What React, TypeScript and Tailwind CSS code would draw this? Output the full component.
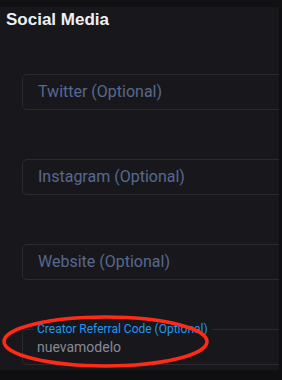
const fields = ["Twitter (Optional)", "Instagram (Optional)", "Website (Optional)"];

const App = () => {
  return (
    <div className="w-[282px] h-[380px] bg-[#0f0f11] flex flex-col overflow-hidden">
      <div className="h-[7px] bg-[#111113]" />
      <div className="relative w-[279px] h-[363px] bg-[#18181c] overflow-hidden">
        <div className="pl-[6px] pt-[3px] text-[17px] leading-[20px] font-bold text-[#eef0f6] font-['Liberation_Sans',Arial,sans-serif]">
          Social Media
        </div>

        <div className="flex flex-col pl-[22px] mt-[44px] gap-[49px] font-['Roboto',sans-serif]">
          {fields.map((f) => (
            <div
              key={f}
              className="w-[300px] h-[36px] rounded-[5px] border border-[#2a2a30] flex items-center pl-[15px] text-[16px] text-[#56698f]"
            >
              {f}
            </div>
          ))}

          <div className="relative w-[300px] h-[36px] rounded-[5px] border border-[#2a2a30] flex items-center pl-[14px] text-[14px] text-[#868996]">
            <span className="absolute -top-[7px] left-[10px] px-[4px] bg-[#18181c] text-[12px] leading-[12px] text-[#2196f3]">
              Creator Referral Code (Optional)
            </span>
            <span className="pt-[1px]">nuevamodelo</span>
          </div>
        </div>

        <svg className="absolute left-0 top-0 pointer-events-none" width="279" height="363" viewBox="0 7 279 363">
          <ellipse cx="105.5" cy="341.5" rx="101.5" ry="24.5" fill="none" stroke="#ff2a17" strokeWidth="3.5" />
        </svg>
      </div>
      <div className="flex-1 bg-[#0f0f11]" />
    </div>
  );
};

export default App;
